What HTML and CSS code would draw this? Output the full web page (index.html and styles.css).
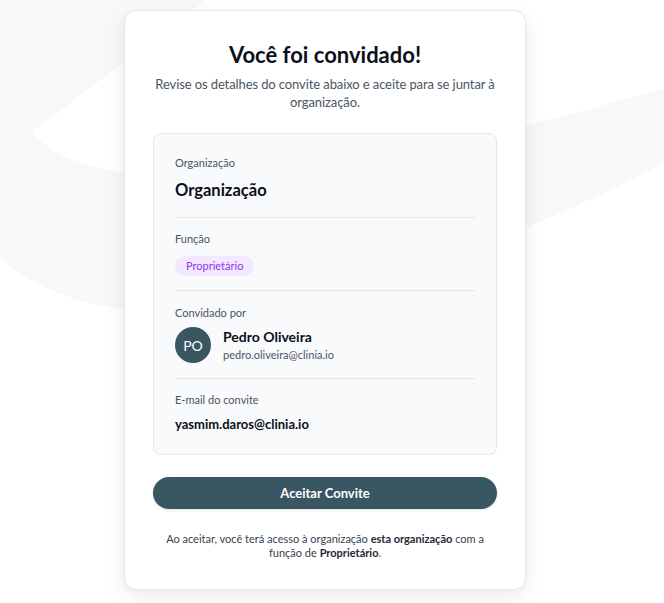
FILE: index.html
```html
<!DOCTYPE html>
<html lang="pt-BR">
<head>
<meta charset="utf-8">
<title>Convite</title>
<link rel="stylesheet" href="styles.css">
</head>
<body>
<svg class="bg-shape" width="664" height="603" viewBox="0 0 664 603" aria-hidden="true">
  <path d="M0,0 L205,0 L32,132 C100,220 420,160 664,88 L664,163 C500,250 150,390 0,258 Z" fill="#f7f8fa"/>
</svg>
<main class="page">
  <section class="card">
    <h1 class="title">Você foi convidado!</h1>
    <p class="subtitle">Revise os detalhes do convite abaixo e aceite para se juntar à organização.</p>

    <div class="details">
      <div class="item item-first">
        <div class="label">Organização</div>
        <div class="value value-lg">Organização</div>
      </div>
      <div class="item item-role">
        <div class="label">Função</div>
        <span class="badge">Proprietário</span>
      </div>
      <div class="item item-inviter">
        <div class="label label-tight">Convidado por</div>
        <div class="person">
          <div class="avatar">PO</div>
          <div class="person-info">
            <div class="person-name">Pedro Oliveira</div>
            <div class="person-email">pedro.oliveira@clinia.io</div>
          </div>
        </div>
      </div>
      <div class="item item-last">
        <div class="label label-tight">E-mail do convite</div>
        <div class="value">yasmim.daros@clinia.io</div>
      </div>
    </div>

    <button class="accept" type="button">Aceitar Convite</button>

    <p class="note">Ao aceitar, você terá acesso à organização <strong>esta organização</strong> com a função de <strong>Proprietário</strong>.</p>
  </section>
</main>
</body>
</html>
```
FILE: styles.css
```css
* { box-sizing: border-box; }
html, body { margin: 0; padding: 0; }
body {
  background: #ffffff;
  font-family: Lato, "Noto Sans", sans-serif;
  color: #111827;
  width: 664px;
  height: 603px;
  overflow: hidden;
  position: relative;
}
.bg-shape {
  position: absolute;
  left: 0;
  top: 0;
  z-index: 0;
}
.page {
  position: relative;
  z-index: 1;
  display: flex;
  justify-content: center;
  padding-top: 10px;
  padding-right: 14px;
}
.card {
  width: 402px;
  background: #ffffff;
  border: 1px solid #e5e7eb;
  border-radius: 12px;
  box-shadow: 0 8px 24px rgba(15, 23, 42, 0.07), 0 2px 6px rgba(15, 23, 42, 0.04);
  padding: 30px 28px 29px;
  text-align: center;
}
.title {
  margin: 0;
  font-size: 22px;
  line-height: 28px;
  font-weight: 700;
  color: #0b0f19;
}
.subtitle {
  margin: 6px -6px 22px;
  font-size: 13px;
  line-height: 18px;
  letter-spacing: -0.1px;
  color: #4b5563;
}
.details {
  text-align: left;
  background: #f8fafc;
  border: 1px solid #e2e8f0;
  border-radius: 8px;
  padding: 21px 21px 20px;
}
.item {
  border-top: 1px solid #e2e8f0;
}
.item-first { padding: 0 0 17px; border-top: none; }
.item-role { padding: 13px 0 14px; }
.item-inviter { padding: 14px 0 15px; }
.item-last { padding: 13px 0 0; }
.label {
  font-size: 11px;
  line-height: 16px;
  color: #4b5563;
  margin-bottom: 9px;
}
.label-tight { margin-bottom: 6px; }
.value {
  font-size: 13px;
  line-height: 20px;
  font-weight: 700;
  color: #0b0f19;
}
.value-lg { font-size: 16.5px; }
.badge {
  display: block;
  width: max-content;
  background: #f3e8ff;
  color: #9333ea;
  font-size: 11px;
  line-height: 20px;
  padding: 0 11px;
  border-radius: 999px;
}
.person {
  display: flex;
  align-items: center;
  gap: 12px;
}
.avatar {
  width: 36px;
  height: 36px;
  border-radius: 50%;
  background: #3a5663;
  color: #ffffff;
  font-size: 14px;
  display: flex;
  align-items: center;
  justify-content: center;
  flex-shrink: 0;
}
.person-info { display: flex; flex-direction: column; }
.person-name {
  font-size: 14px;
  line-height: 20px;
  font-weight: 700;
  color: #0b0f19;
}
.person-email {
  font-size: 11px;
  line-height: 16px;
  color: #4b5563;
}
.accept {
  display: block;
  width: 100%;
  height: 32px;
  margin-top: 22px;
  border: none;
  border-radius: 999px;
  background: #395663;
  color: #ffffff;
  font-family: inherit;
  font-size: 13px;
  font-weight: 700;
  box-shadow: 0 1px 3px rgba(0,0,0,0.12);
}
.note {
  margin: 23px 10px 0;
  font-size: 11px;
  line-height: 14px;
  color: #374151;
}
.note strong { font-weight: 700; color: #1f2937; }
```
